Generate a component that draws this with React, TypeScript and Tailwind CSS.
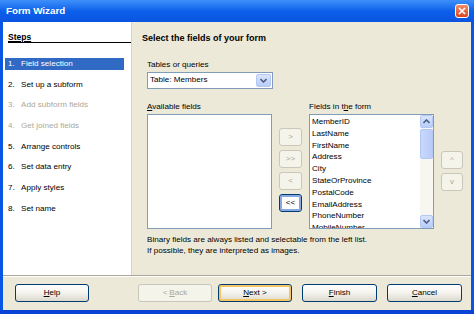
import React from 'react';

type BtnKind = 'normal' | 'disabled' | 'default' | 'focused';

const XpButton: React.FC<{ kind?: BtnKind; className?: string; children: React.ReactNode }> = ({
  kind = 'normal',
  className = '',
  children,
}) => {
  const base = 'h-[18px] flex items-center justify-center rounded-[3px] border leading-none';
  const styles: Record<BtnKind, string> = {
    normal: 'border-[#003c74] bg-linear-to-b from-white via-[#f4f3ee] to-[#dcd8cc] text-black',
    disabled: 'border-[#c9c7ba] bg-[#f5f4ea] text-[#aca899]',
    default:
      'border-[#003c74] bg-linear-to-b from-white via-[#f4f3ee] to-[#dcd8cc] text-black shadow-[inset_0_0_0_2px_#f5c563]',
    focused: 'border-[#003c74] bg-white text-black shadow-[inset_0_0_0_2px_#87a9e0]',
  };
  return <div className={`${base} ${styles[kind]} ${className}`}>{children}</div>;
};

const Chevron: React.FC<{ up?: boolean; className?: string }> = ({ up, className = '' }) => (
  <svg width="7" height="5" viewBox="0 0 7 5" className={className}>
    <polyline
      points={up ? '0.5,4 3.5,1 6.5,4' : '0.5,1 3.5,4 6.5,1'}
      fill="none"
      stroke="#4d6185"
      strokeWidth="1.6"
    />
  </svg>
);

const ScrollBtn: React.FC<{ up?: boolean }> = ({ up }) => (
  <div className="h-[13px] w-[13px] rounded-[2px] border border-[#b4c8f6] bg-linear-to-b from-[#d9e5fd] to-[#b9cdf9] flex items-center justify-center">
    <Chevron up={up} />
  </div>
);

const steps = [
  { n: '1.', label: 'Field selection', state: 'active' },
  { n: '2.', label: 'Set up a subform', state: 'normal' },
  { n: '3.', label: 'Add subform fields', state: 'disabled' },
  { n: '4.', label: 'Get joined fields', state: 'disabled' },
  { n: '5.', label: 'Arrange controls', state: 'normal' },
  { n: '6.', label: 'Set data entry', state: 'normal' },
  { n: '7.', label: 'Apply styles', state: 'normal' },
  { n: '8.', label: 'Set name', state: 'normal' },
];

const formFields = [
  'MemberID',
  'LastName',
  'FirstName',
  'Address',
  'City',
  'StateOrProvince',
  'PostalCode',
  'EmailAddress',
  'PhoneNumber',
  'MobileNumber',
];

export default function App() {
  return (
    <div className="w-[474px] h-[314px] flex flex-col overflow-hidden bg-[#0a56e4] font-['Liberation_Sans',Arial,sans-serif] text-[8.1px] text-black select-none">
      {/* title bar */}
      <div className="h-[22px] shrink-0 flex items-center justify-between pl-[6px] pr-[5px] bg-linear-to-b from-[#3d90fa] via-[#0c60ea] to-[#0a54e0]">
        <span className="text-white font-bold text-[9.8px] leading-none">Form Wizard</span>
        <div className="w-[14px] h-[14px] rounded-[3px] border border-white bg-linear-to-b from-[#f08a63] to-[#d9461c] flex items-center justify-center">
          <svg width="8" height="8" viewBox="0 0 8 8">
            <path d="M1 1 L7 7 M7 1 L1 7" stroke="white" strokeWidth="1.7" />
          </svg>
        </div>
      </div>

      <div className="flex-1 mx-[3px] flex flex-col bg-[#ece9d8]">
        <div className="h-[253px] shrink-0 flex">
          {/* steps */}
          <div className="w-[128px] shrink-0 bg-white flex flex-col pt-[11px]">
            <div className="ml-[5px] h-[10px] border-b border-black font-bold text-[8.5px] leading-[9px]">
              <span className="underline">Steps</span>
            </div>
            <div className="mt-[15px] flex flex-col gap-[8.7px]">
              {steps.map((s) => (
                <div
                  key={s.n}
                  className={`ml-[2px] w-[119px] h-[12px] flex items-center pl-[3px] leading-none ${
                    s.state === 'active'
                      ? 'bg-[#316ac5] text-white'
                      : s.state === 'disabled'
                      ? 'text-[#aca899]'
                      : 'text-black'
                  }`}
                >
                  <span className="w-[13px]">{s.n}</span>
                  <span>{s.label}</span>
                </div>
              ))}
            </div>
          </div>

          {/* page */}
          <div className="flex-1 flex flex-col pl-[15px] border-l border-[#d8d4c6]">
            <div className="-ml-[5px] mt-[11px] h-[11px] font-bold text-[9px] leading-[11px]">
              Select the fields of your form
            </div>
            <div className="mt-[16px] h-[10px] leading-[10px]">Tables or queries</div>
            <div className="mt-[2px] w-[126px] h-[17px] bg-white border border-[#7f9db9] flex items-center justify-between pl-[2px] pr-px">
              <span className="leading-none">Table: Members</span>
              <div className="w-[15px] h-[13px] rounded-[2px] border border-[#b4c8f6] bg-linear-to-b from-[#d9e5fd] to-[#b9cdf9] flex items-center justify-center">
                <Chevron />
              </div>
            </div>

            <div className="mt-[12px] flex">
              <div className="w-[125px] flex flex-col">
                <div className="h-[12px] leading-[12px]">
                  <span className="underline">A</span>vailable fields
                </div>
                <div className="mt-px h-[115px] bg-white border border-[#7f9db9]" />
              </div>

              <div className="ml-[7px] pt-[27px] flex flex-col gap-[4px]">
                <XpButton kind="disabled" className="w-[23px]">&gt;</XpButton>
                <XpButton kind="disabled" className="w-[23px]">&gt;&gt;</XpButton>
                <XpButton kind="disabled" className="w-[23px]">&lt;</XpButton>
                <XpButton kind="focused" className="w-[23px]">&lt;&lt;</XpButton>
              </div>

              <div className="ml-[7px] w-[125px] flex flex-col">
                <div className="h-[12px] leading-[12px]">
                  Fields in t<span className="underline">h</span>e form
                </div>
                <div className="mt-px h-[115px] bg-white border border-[#7f9db9] flex overflow-hidden">
                  <div className="flex-1 pt-px pl-[2px] overflow-hidden">
                    {formFields.map((f) => (
                      <div key={f} className="h-[11.8px] leading-[11.8px] whitespace-nowrap">
                        {f}
                      </div>
                    ))}
                  </div>
                  <div className="w-[13px] flex flex-col bg-[#f7f6f1]">
                    <ScrollBtn up />
                    <div className="mt-px h-[30px] rounded-[2px] border border-[#b1c6f1] bg-linear-to-r from-[#c9d8fb] to-[#b8cbf7]" />
                    <div className="flex-1" />
                    <ScrollBtn />
                  </div>
                </div>
              </div>

              <div className="ml-[7px] pt-[50px] flex flex-col gap-[4px]">
                <XpButton kind="disabled" className="w-[22px]">^</XpButton>
                <XpButton kind="disabled" className="w-[22px]">v</XpButton>
              </div>
            </div>

            <div className="mt-[5px] leading-[11px]">
              <div>Binary fields are always listed and selectable from the left list.</div>
              <div>If possible, they are interpreted as images.</div>
            </div>
          </div>
        </div>

        <div className="h-px bg-[#aca899]" />
        <div className="h-px bg-white" />

        <div className="flex-1 flex items-start pt-[7px] pl-[12px]">
          <XpButton className="w-[74px]">
            <span className="underline">H</span>elp
          </XpButton>
          <XpButton kind="disabled" className="ml-[49px] w-[74px]">
            &lt; <span className="underline ml-[2px]">B</span>ack
          </XpButton>
          <XpButton kind="default" className="ml-[6px] w-[74px]">
            <span className="underline">N</span>ext &gt;
          </XpButton>
          <XpButton className="ml-[10px] w-[75px]">
            <span className="underline">F</span>inish
          </XpButton>
          <XpButton className="ml-[10px] w-[75px]">
            <span className="underline">C</span>ancel
          </XpButton>
        </div>
      </div>
      <div className="h-[4px] shrink-0 bg-[#0843d6]" />
    </div>
  );
}
